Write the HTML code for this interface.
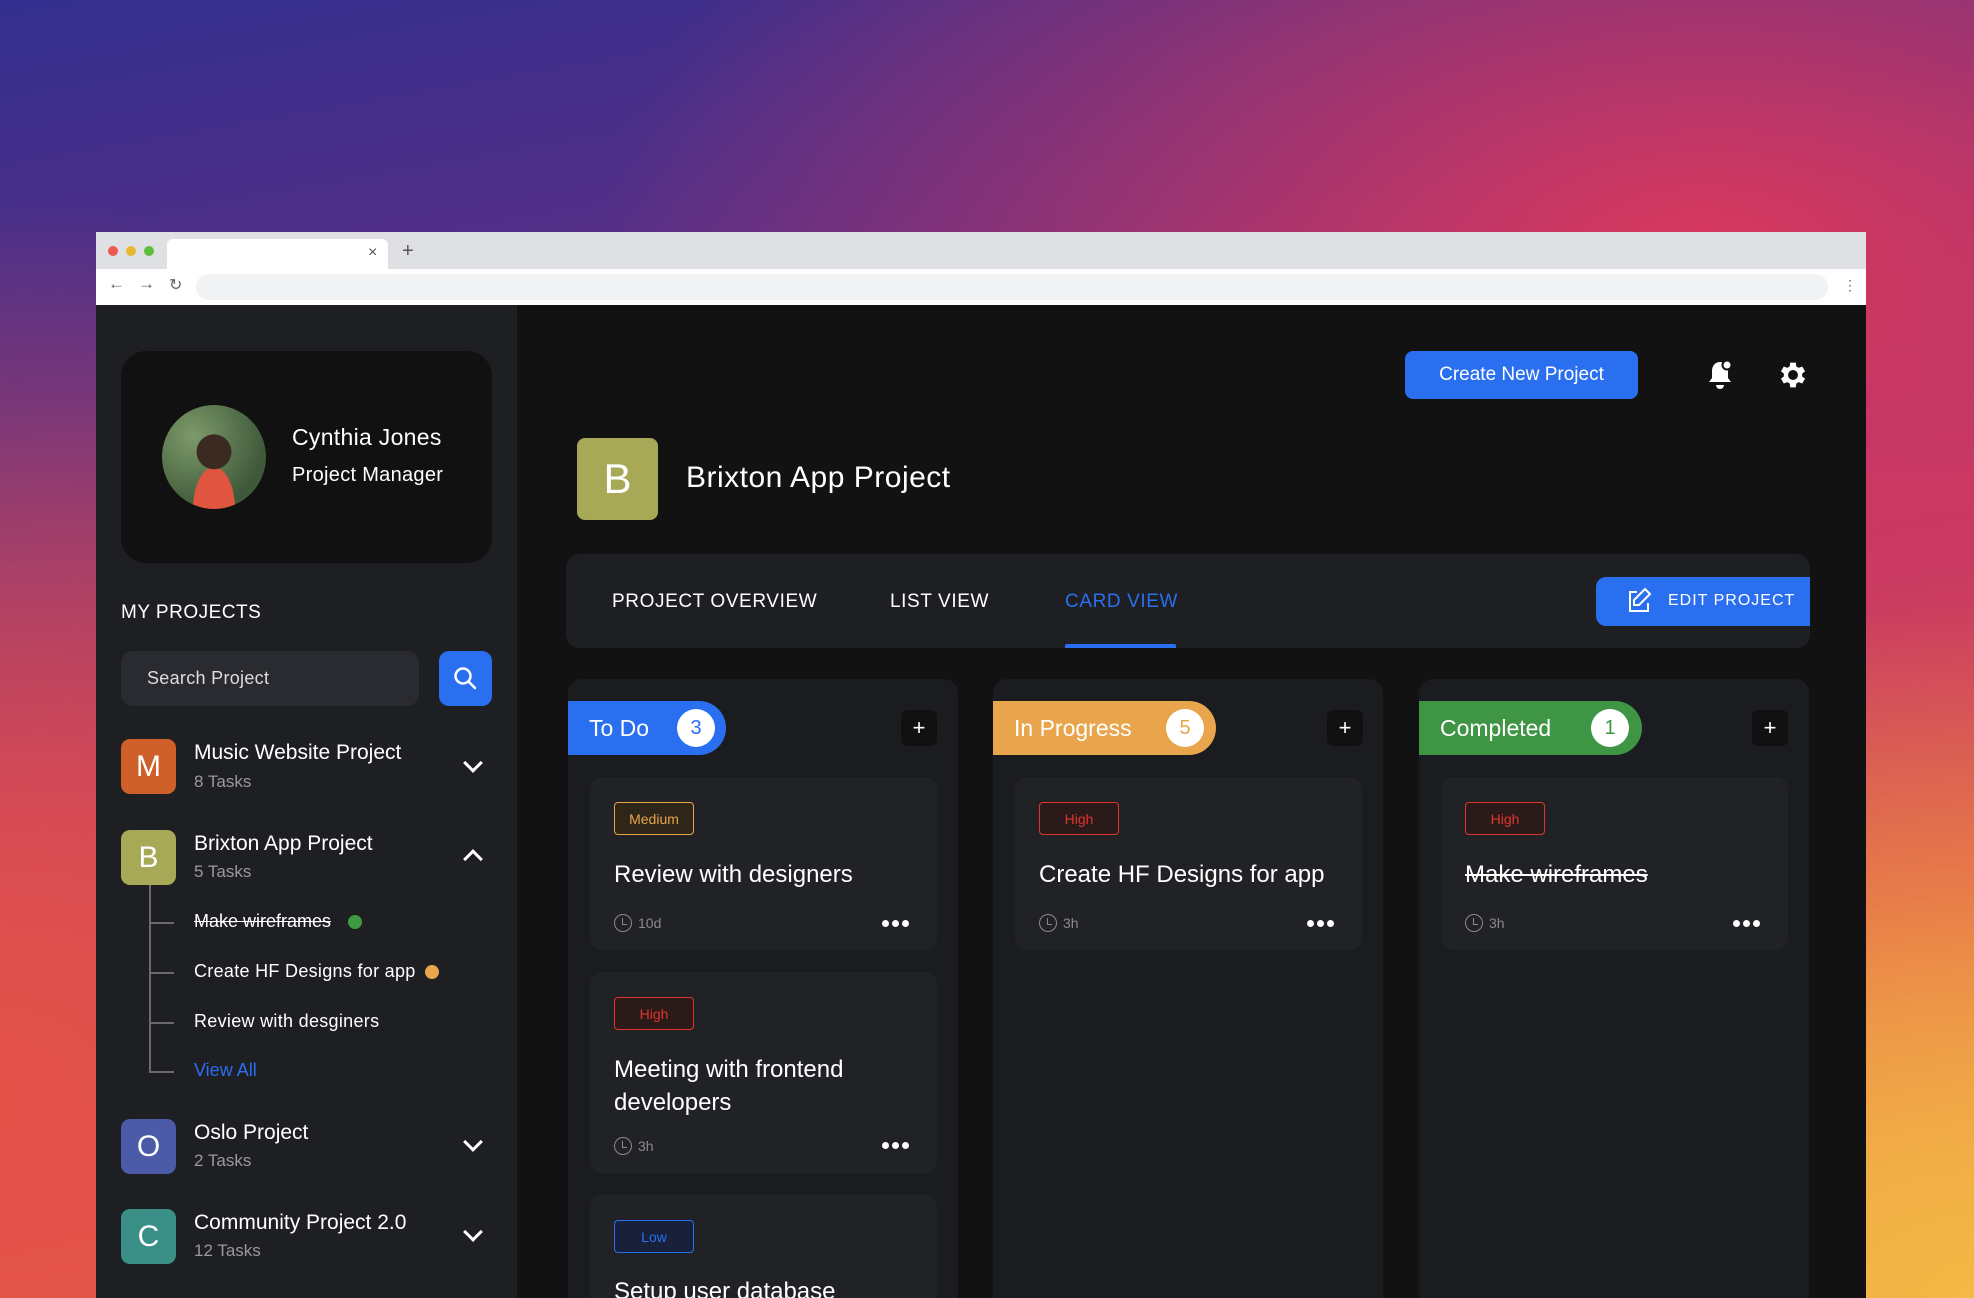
<!DOCTYPE html>
<html style="width:1974px;height:1298px;overflow:hidden"><head><meta charset="utf-8"><style>
*{margin:0;padding:0;box-sizing:border-box}
body{width:1974px;height:1298px;overflow:hidden;position:relative;font-family:"Liberation Sans",sans-serif;
background:
radial-gradient(ellipse 900px 700px at 1974px 1298px,#f3b845 0%,rgba(243,184,69,0) 100%),
radial-gradient(ellipse 1100px 600px at 1700px 250px,#d8385e 0%,rgba(216,56,94,0) 100%),
radial-gradient(ellipse 800px 900px at 0px 1100px,#e4534a 0%,rgba(228,83,74,0) 100%),
linear-gradient(170deg,#332f8e 0%,#5b2f86 25%,#b8376a 50%,#e0504c 75%,#f0a048 100%);}
.a{position:absolute}
.t{position:absolute;white-space:nowrap;color:#fff}
.side{left:96px;top:305px;width:421px;height:993px;background:#1e1f23}
.main{left:517px;top:305px;width:1349px;height:993px;background:#121212;overflow:hidden}
.ic{position:absolute;width:55px;height:55px;border-radius:9px;color:#fff;font-size:30px;display:flex;align-items:center;justify-content:center}
.pn{font-size:21px;color:#fff}
.pt{font-size:17px;color:#9a9a9e}
.col{position:absolute;top:374px;width:390px;height:640px;background:#1b1c1f;border-radius:14px}
.pill{position:absolute;top:701px;height:54px;border-radius:0 27px 27px 0;color:#fff;font-size:23px;display:flex;align-items:center;padding-left:21px}
.badge{position:absolute;width:38px;height:38px;border-radius:50%;background:#fff;font-size:20px;display:flex;align-items:center;justify-content:center;top:8px}
.plus{position:absolute;top:710px;width:36px;height:36px;background:#111;border-radius:6px;color:#fff;font-size:22px;display:flex;align-items:center;justify-content:center}
.card{position:absolute;width:347px;background:#212226;border-radius:12px}
.tag{position:absolute;left:24px;height:33px;border-radius:4px;font-size:14px;display:flex;align-items:center;justify-content:center;border:1.5px solid}
.ct{position:absolute;left:24px;font-size:24px;color:#fff;line-height:33px}
.tm{position:absolute;left:24px;font-size:14px;color:#8a8a8e;display:flex;align-items:center;gap:6px}
.clk{width:18px;height:18px;border:1.5px solid #8a8a8e;border-radius:50%;position:relative}
.clk:after{content:"";position:absolute;left:7px;top:3px;width:4px;height:6px;border-left:1.5px solid #8a8a8e;border-bottom:1.5px solid #8a8a8e}
.dots{position:absolute;right:28px;font-size:14px;color:#fff;letter-spacing:1px}
.dots i{display:inline-block;width:7px;height:7px;background:#fff;border-radius:50%;margin-left:3px}
.chev{position:absolute;left:466px;width:14px;height:14px;border-right:3px solid #fff;border-bottom:3px solid #fff}
</style></head><body>
<div class="a" style="left:96px;top:232px;width:1770px;height:37px;background:#dfe0e4"></div>
<div class="a" style="left:108px;top:246px;width:10px;height:10px;border-radius:50%;background:#ee5a52"></div>
<div class="a" style="left:126px;top:246px;width:10px;height:10px;border-radius:50%;background:#e6b931"></div>
<div class="a" style="left:144px;top:246px;width:10px;height:10px;border-radius:50%;background:#5cbf3c"></div>
<div class="a" style="left:167px;top:239px;width:221px;height:31px;background:#fff;border-radius:6px 6px 0 0"></div>
<div class="t" style="left:368px;top:244px;color:#555;font-size:16px">×</div>
<div class="t" style="left:402px;top:240px;color:#555;font-size:20px">+</div>
<div class="a" style="left:96px;top:269px;width:1770px;height:36px;background:#fff"></div>
<div class="t" style="left:108px;top:274px;color:#666;font-size:17px">←</div>
<div class="t" style="left:138px;top:274px;color:#666;font-size:17px">→</div>
<div class="t" style="left:169px;top:275px;color:#666;font-size:16px">↻</div>
<div class="a" style="left:196px;top:274px;width:1632px;height:26px;background:#f1f2f4;border-radius:13px"></div>
<div class="t" style="left:1843px;top:277px;color:#666;font-size:14px">⋮</div>

<div class="a side"></div>
<div class="a" style="left:121px;top:351px;width:371px;height:212px;background:#111;border-radius:25px"></div>
<div class="a" style="left:162px;top:405px;width:104px;height:104px;border-radius:50%;background:radial-gradient(circle at 50% 45%,#3b2a22 0 22%,rgba(0,0,0,0) 23%),radial-gradient(ellipse at 50% 100%,#e0553f 0 28%,rgba(0,0,0,0) 29%),radial-gradient(circle at 30% 30%,#7d9a6a,#3f5a3a 70%)"></div>
<div class="t" style="left:292px;top:424px;font-size:23px;letter-spacing:.3px">Cynthia Jones</div>
<div class="t" style="left:292px;top:464px;font-size:20px;letter-spacing:.3px">Project Manager</div>
<div class="t" style="left:121px;top:602px;font-size:19px;letter-spacing:.5px">MY PROJECTS</div>
<div class="a" style="left:121px;top:651px;width:298px;height:55px;background:#2a2b30;border-radius:12px"></div>
<div class="t" style="left:147px;top:668px;font-size:18px;color:#ddd;letter-spacing:.3px">Search Project</div>
<div class="a" style="left:439px;top:651px;width:53px;height:55px;background:#2a6ff0;border-radius:10px"></div>
<svg class="a" style="left:452px;top:665px" width="26" height="26" viewBox="0 0 26 26"><circle cx="11" cy="11" r="7.5" fill="none" stroke="#fff" stroke-width="2.5"/><line x1="16.5" y1="16.5" x2="23" y2="23" stroke="#fff" stroke-width="2.5" stroke-linecap="round"/></svg>

<div class="ic" style="left:121px;top:739px;background:#d0602a">M</div>
<div class="t pn" style="left:194px;top:741px">Music Website Project</div>
<div class="t pt" style="left:194px;top:772px">8 Tasks</div>
<div class="chev" style="top:756px;transform:rotate(45deg)"></div>

<div class="ic" style="left:121px;top:830px;background:#a7a956">B</div>
<div class="t pn" style="left:194px;top:832px">Brixton App Project</div>
<div class="t pt" style="left:194px;top:862px">5 Tasks</div>
<div class="chev" style="top:852px;transform:rotate(-135deg)"></div>

<div class="a" style="left:149px;top:885px;width:2px;height:188px;background:#6a6a6e"></div>
<div class="a" style="left:149px;top:922px;width:25px;height:1.5px;background:#6a6a6e"></div>
<div class="a" style="left:149px;top:972px;width:25px;height:1.5px;background:#6a6a6e"></div>
<div class="a" style="left:149px;top:1022px;width:25px;height:1.5px;background:#6a6a6e"></div>
<div class="a" style="left:149px;top:1071px;width:25px;height:1.5px;background:#6a6a6e"></div>
<div class="t" style="left:194px;top:911px;font-size:18px;text-decoration:line-through">Make wireframes</div>
<div class="a" style="left:348px;top:915px;width:14px;height:14px;border-radius:50%;background:#3e9a42"></div>
<div class="t" style="left:194px;top:961px;font-size:18px;letter-spacing:.3px">Create HF Designs for app</div>
<div class="a" style="left:425px;top:965px;width:14px;height:14px;border-radius:50%;background:#e9a548"></div>
<div class="t" style="left:194px;top:1011px;font-size:18px;letter-spacing:.3px">Review with desginers</div>
<div class="t" style="left:194px;top:1060px;font-size:18px;color:#2a6ff0">View All</div>

<div class="ic" style="left:121px;top:1119px;background:#4b5ba8">O</div>
<div class="t pn" style="left:194px;top:1121px">Oslo Project</div>
<div class="t pt" style="left:194px;top:1151px">2 Tasks</div>
<div class="chev" style="top:1135px;transform:rotate(45deg)"></div>

<div class="ic" style="left:121px;top:1209px;background:#3a8f86">C</div>
<div class="t pn" style="left:194px;top:1211px">Community Project 2.0</div>
<div class="t pt" style="left:194px;top:1241px">12 Tasks</div>
<div class="chev" style="top:1225px;transform:rotate(45deg)"></div>

<div class="a main">
<div class="col" style="left:51px"></div>
<div class="col" style="left:476px"></div>
<div class="col" style="left:902px"></div>
<div class="card" style="left:73px;top:890px;height:140px">
<div class="tag" style="top:25px;width:80px;color:#2a6ff0;border-color:#2a6ff0;background:#18203a">Low</div>
<div class="ct" style="top:80px">Setup user database</div>
</div>
</div>
<div class="a" style="left:1405px;top:351px;width:233px;height:48px;background:#2a6ff0;border-radius:8px;color:#fff;font-size:19px;display:flex;align-items:center;justify-content:center">Create New Project</div>
<svg class="a" style="left:1704px;top:358px" width="32" height="34" viewBox="0 0 32 34"><path d="M16 4c-5 0-8 4-8 9v7l-3 4h22l-3-4v-7c0-5-3-9-8-9z" fill="#fff"/><path d="M12 27a4 4 0 0 0 8 0z" fill="#fff"/><circle cx="23" cy="7" r="4.5" fill="#fff" stroke="#121212" stroke-width="2"/></svg>
<svg class="a" style="left:1776px;top:358px" width="34" height="34" viewBox="0 0 24 24"><path fill="#fff" d="M19.4 13a7.5 7.5 0 0 0 0-2l2.1-1.6-2-3.4-2.5 1a7.3 7.3 0 0 0-1.7-1L15 3.3h-4L10.7 6a7.3 7.3 0 0 0-1.7 1l-2.5-1-2 3.4L6.6 11a7.5 7.5 0 0 0 0 2l-2.1 1.6 2 3.4 2.5-1a7.3 7.3 0 0 0 1.7 1l.3 2.7h4l.3-2.7a7.3 7.3 0 0 0 1.7-1l2.5 1 2-3.4zM13 15.5a3.5 3.5 0 1 1 0-7 3.5 3.5 0 0 1 0 7z" transform="translate(-1 0)"/></svg>

<div class="a" style="left:577px;top:438px;width:81px;height:82px;background:#a7a956;border-radius:8px;color:#fff;font-size:42px;display:flex;align-items:center;justify-content:center">B</div>
<div class="t" style="left:686px;top:461px;font-size:30px;letter-spacing:.5px">Brixton App Project</div>

<div class="a" style="left:566px;top:554px;width:1244px;height:94px;background:#1e1f23;border-radius:14px"></div>
<div class="t" style="left:612px;top:591px;font-size:19px;letter-spacing:.6px">PROJECT OVERVIEW</div>
<div class="t" style="left:890px;top:591px;font-size:19px;letter-spacing:.6px">LIST VIEW</div>
<div class="t" style="left:1065px;top:591px;font-size:19px;letter-spacing:.6px;color:#2a6ff0">CARD VIEW</div>
<div class="a" style="left:1065px;top:644px;width:111px;height:4px;background:#2a6ff0;border-radius:2px 2px 0 0"></div>
<div class="a" style="left:1596px;top:577px;width:214px;height:49px;background:#2a6ff0;border-radius:10px 0 0 10px"></div>
<svg class="a" style="left:1624px;top:586px" width="30" height="30" viewBox="0 0 30 30" fill="none" stroke="#fff" stroke-width="2"><path d="M13 6H6v19h18v-8"/><path d="M21 3l5 5-11 11h-5v-5z"/></svg>
<div class="t" style="left:1668px;top:592px;font-size:16px;letter-spacing:1px">EDIT PROJECT</div>

<div class="pill" style="left:568px;width:158px;background:#2a6ff0">To Do<div class="badge" style="left:109px;color:#2a6ff0">3</div></div>
<div class="plus" style="left:901px">+</div>
<div class="pill" style="left:993px;width:223px;background:#e9a54c">In Progress<div class="badge" style="left:173px;color:#e9a54c">5</div></div>
<div class="plus" style="left:1327px">+</div>
<div class="pill" style="left:1419px;width:223px;background:#3e9544">Completed<div class="badge" style="left:172px;color:#3e9544">1</div></div>
<div class="plus" style="left:1752px">+</div>

<div class="card" style="left:590px;top:777px;height:173px">
<div class="tag" style="top:25px;width:80px;color:#e9a54c;border-color:#e9a54c;background:#2e2618">Medium</div>
<div class="ct" style="top:81px">Review with designers</div>
<div class="tm" style="top:137px"><span class="clk"></span>10d</div>
<div class="dots" style="top:137px"><i></i><i></i><i></i></div>
</div>
<div class="card" style="left:590px;top:972px;height:201px">
<div class="tag" style="top:25px;width:80px;color:#e0352b;border-color:#e0352b;background:#2b1a1a">High</div>
<div class="ct" style="top:81px;width:310px;white-space:normal">Meeting with frontend developers</div>
<div class="tm" style="top:165px"><span class="clk"></span>3h</div>
<div class="dots" style="top:164px"><i></i><i></i><i></i></div>
</div>

<div class="card" style="left:1015px;top:777px;height:173px">
<div class="tag" style="top:25px;width:80px;color:#e0352b;border-color:#e0352b;background:#2b1a1a">High</div>
<div class="ct" style="top:81px">Create HF Designs for app</div>
<div class="tm" style="top:137px"><span class="clk"></span>3h</div>
<div class="dots" style="top:137px"><i></i><i></i><i></i></div>
</div>
<div class="card" style="left:1441px;top:777px;height:173px">
<div class="tag" style="top:25px;width:80px;color:#e0352b;border-color:#e0352b;background:#2b1a1a">High</div>
<div class="ct" style="top:81px;text-decoration:line-through">Make wireframes</div>
<div class="tm" style="top:137px"><span class="clk"></span>3h</div>
<div class="dots" style="top:137px"><i></i><i></i><i></i></div>
</div>
</body></html>
